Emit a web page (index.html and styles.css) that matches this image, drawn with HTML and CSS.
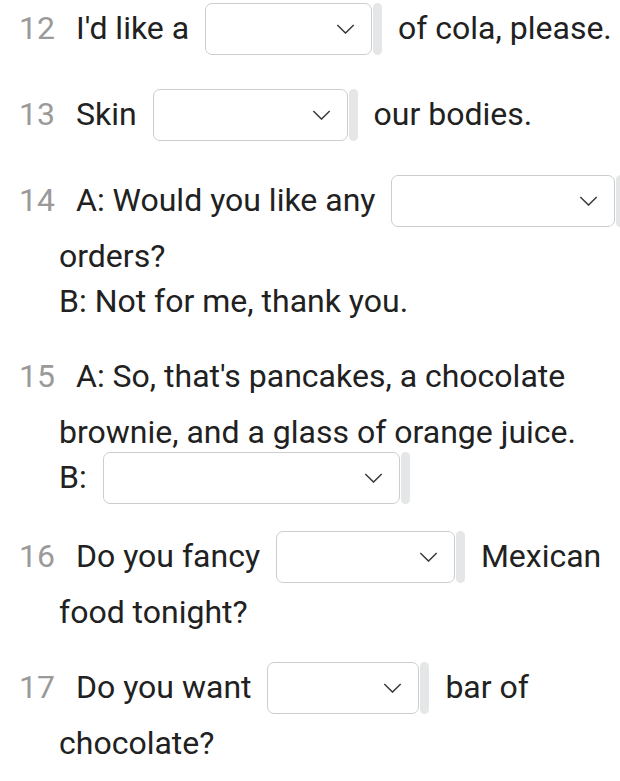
FILE: index.html
```html
<!DOCTYPE html>
<html lang="en">
<head>
    <meta charset="UTF-8">
    <meta name="viewport" content="width=device-width, initial-scale=1.0">
    <title>Food and Drink - Exercise</title>
    <link rel="stylesheet" href="styles.css">
</head>
<body>
    <div class="sheet">
        <p class="item"><span class="num">12</span>I'd like a <span class="blank"><span class="blank-row"><span class="box w-167"><svg class="chev" viewBox="0 0 20 11"><path d="M1 1 L10 10 L19 1"/></svg></span><span class="bar"></span></span></span> of cola, please.</p>

        <p class="item"><span class="num">13</span>Skin <span class="blank"><span class="blank-row"><span class="box w-195"><svg class="chev" viewBox="0 0 20 11"><path d="M1 1 L10 10 L19 1"/></svg></span><span class="bar"></span></span></span> our bodies.</p>

        <p class="item"><span class="num">14</span>A: Would you like any <span class="blank"><span class="blank-row"><span class="box w-224"><svg class="chev" viewBox="0 0 20 11"><path d="M1 1 L10 10 L19 1"/></svg></span><span class="bar"></span></span></span> orders?<br>B: Not for me, thank you.</p>

        <p class="item"><span class="num">15</span>A: So, that's pancakes, a chocolate brownie, and a glass of orange juice.<br>B: <span class="blank"><span class="blank-row"><span class="box w-297"><svg class="chev" viewBox="0 0 20 11"><path d="M1 1 L10 10 L19 1"/></svg></span><span class="bar"></span></span></span></p>

        <p class="item"><span class="num">16</span>Do you fancy <span class="blank"><span class="blank-row"><span class="box w-179"><svg class="chev" viewBox="0 0 20 11"><path d="M1 1 L10 10 L19 1"/></svg></span><span class="bar"></span></span></span> Mexican food tonight?</p>

        <p class="item"><span class="num">17</span>Do you want <span class="blank"><span class="blank-row"><span class="box w-152"><svg class="chev" viewBox="0 0 20 11"><path d="M1 1 L10 10 L19 1"/></svg></span><span class="bar"></span></span></span> bar of chocolate?</p>
    </div>
</body>
</html>
```

FILE: styles.css
```css
html, body {
    overflow-x: hidden;
}
body {
    margin: 0;
    background: #fff;
    font-family: Roboto, 'Noto Sans', sans-serif;
    font-size: 32px;
    color: #212121;
}
.sheet {
    width: 640px;
    padding-top: 6px;
}
.item {
    margin: 0 0 30px;
    padding-left: 59px;
    text-indent: -40px;
    line-height: 45px;
}
.num {
    display: inline-block;
    width: 57px;
    padding-bottom: 11px;
    text-indent: 0;
    color: #9a9a9a;
}
.blank {
    display: inline-block;
    overflow: hidden;
    vertical-align: -16px;
    margin: -4px 8px 0 8px;
    text-indent: 0;
}
.blank-row {
    display: flex;
    gap: 1px;
}
.box {
    box-sizing: border-box;
    height: 52px;
    border: 1.5px solid #cdcdcd;
    border-radius: 7px;
    background: #fff;
    display: flex;
    align-items: center;
    justify-content: flex-end;
    padding-right: 16px;
}
.w-152 { width: 152px; }
.w-167 { width: 167px; }
.w-179 { width: 179px; }
.w-195 { width: 195px; }
.w-224 { width: 224px; }
.w-297 { width: 297px; }
.chev {
    width: 19px;
    height: 10px;
    fill: none;
    stroke: #3a3a3a;
    stroke-width: 1.6;
}
.bar {
    width: 9px;
    height: 52px;
    border-radius: 5px;
    background: #e5e6e8;
}
```
